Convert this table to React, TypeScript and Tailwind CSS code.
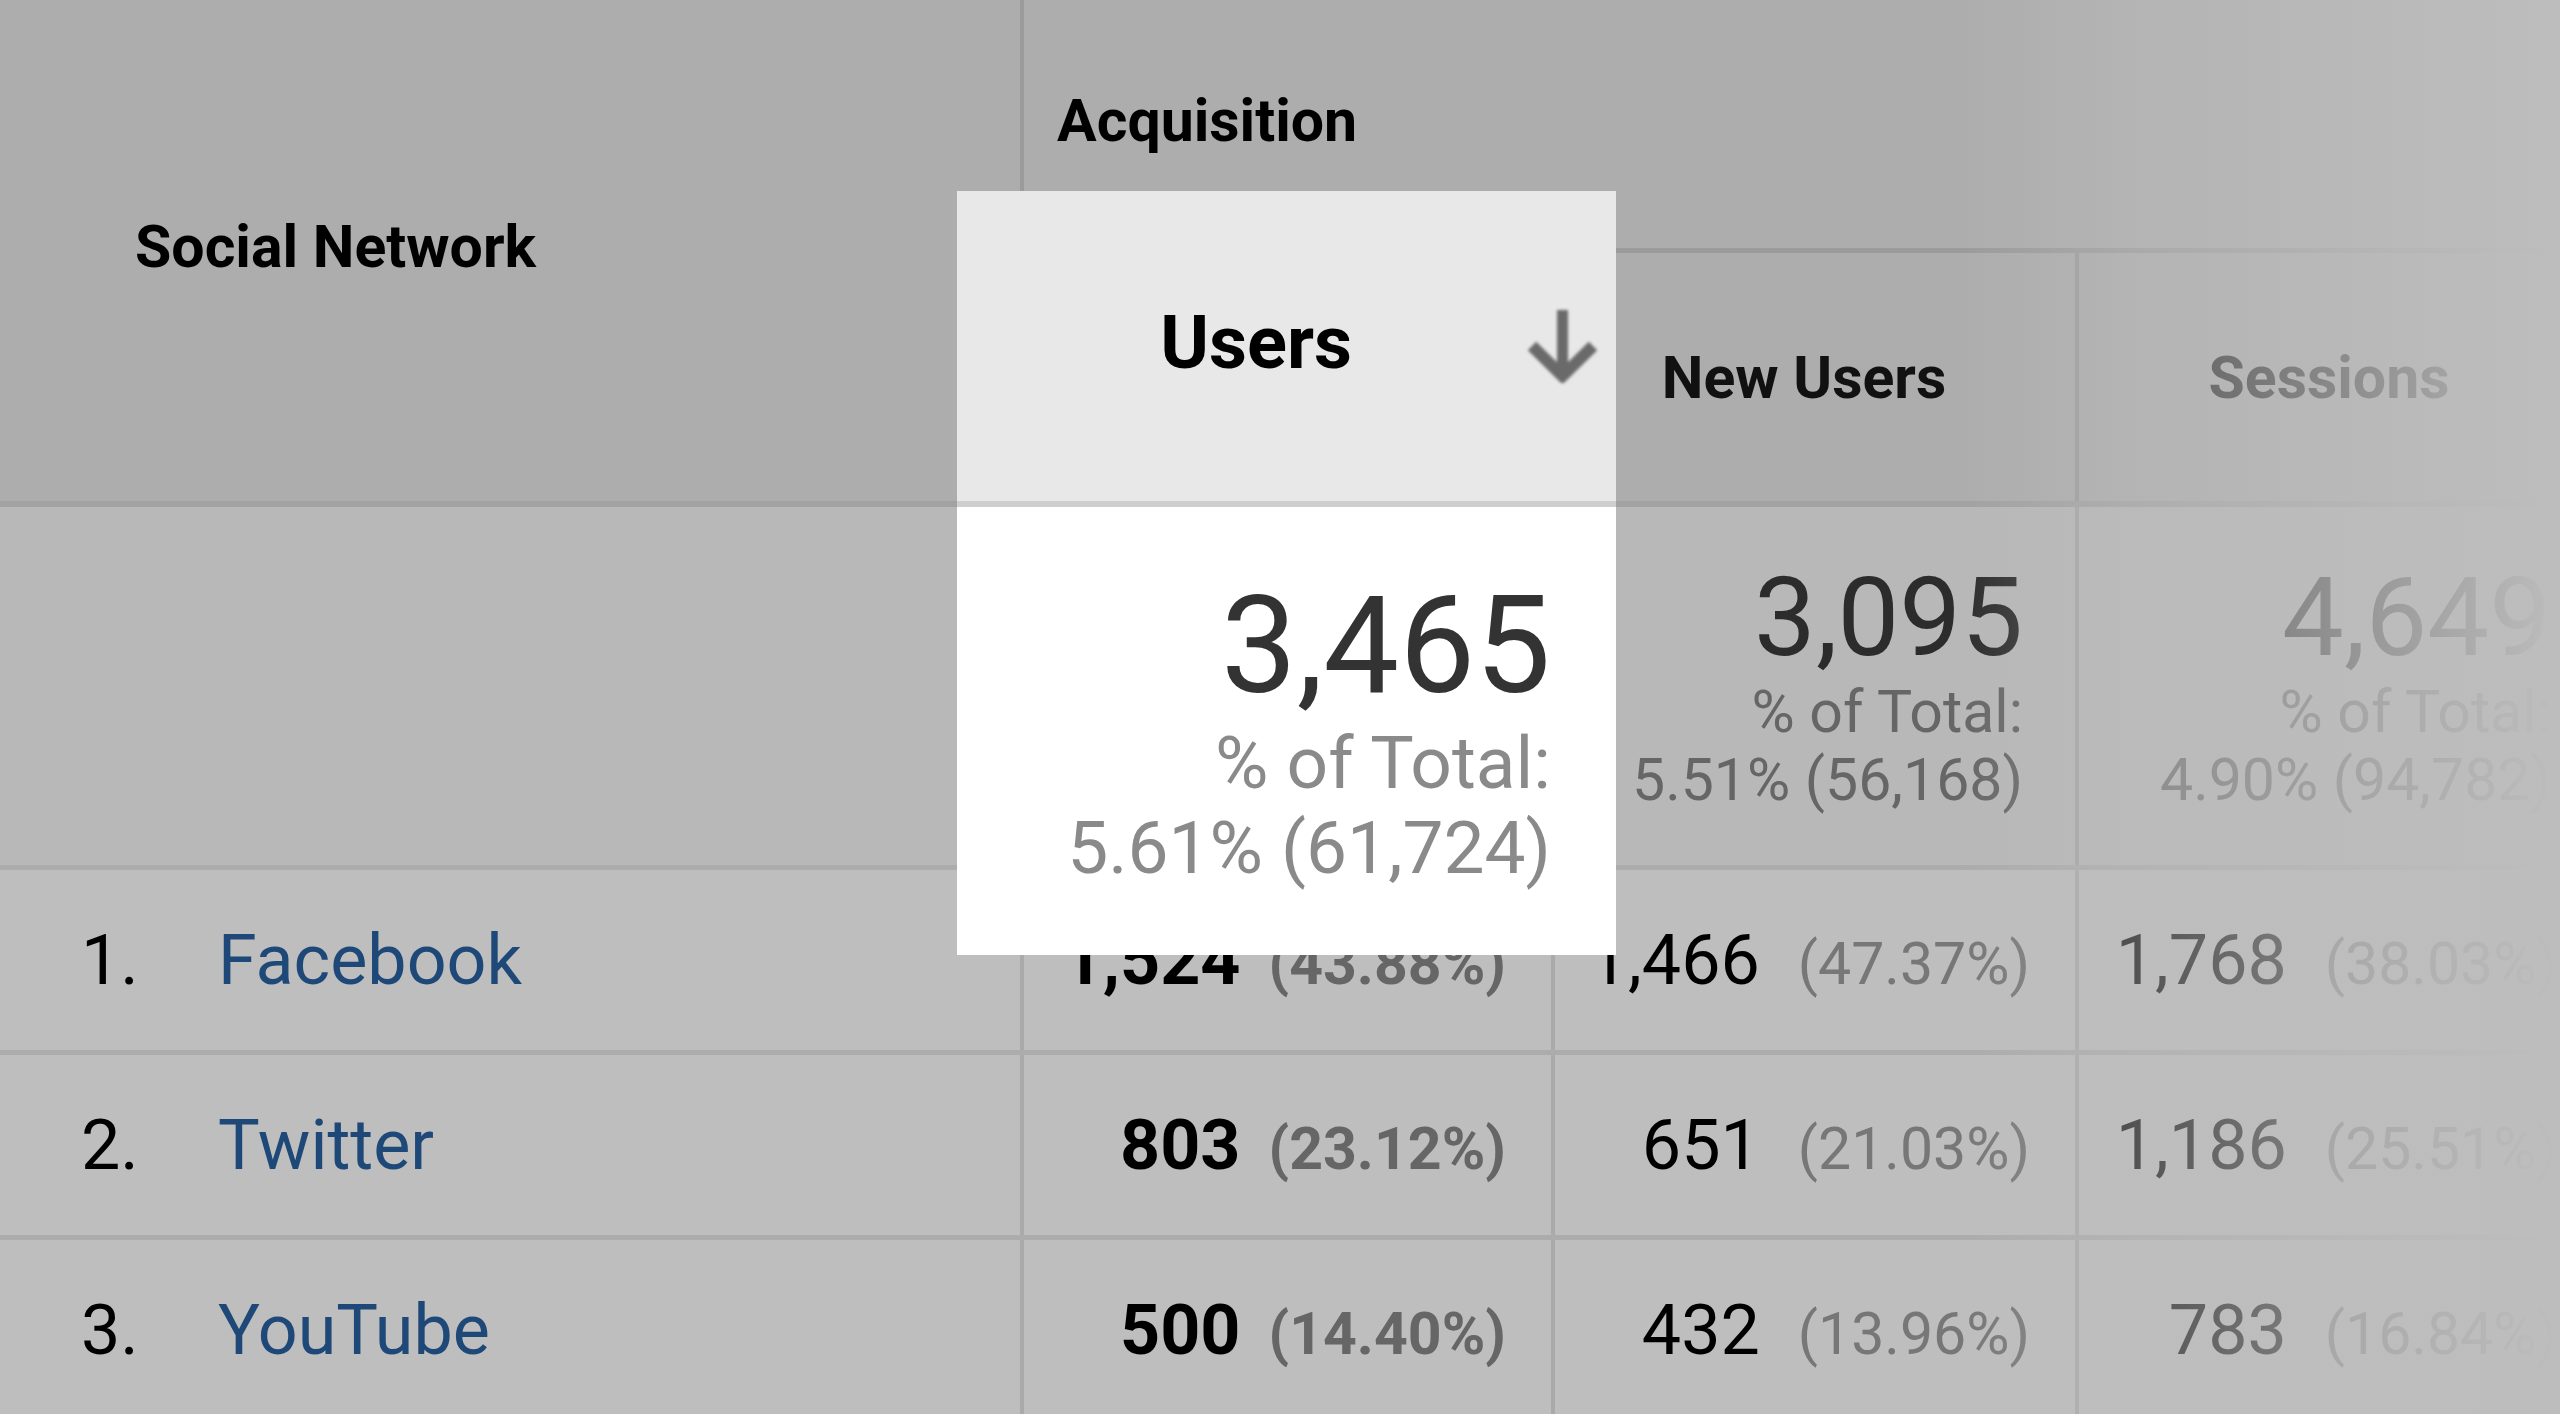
import React from "react";

type Row = {
  n: string;
  name: string;
  u: string;
  up: string;
  nu: string;
  nup: string;
  s: string;
  sp: string;
};

const rows: Row[] = [
  { n: "1.", name: "Facebook", u: "1,524", up: "(43.88%)", nu: "1,466", nup: "(47.37%)", s: "1,768", sp: "(38.03%)" },
  { n: "2.", name: "Twitter", u: "803", up: "(23.12%)", nu: "651", nup: "(21.03%)", s: "1,186", sp: "(25.51%)" },
  { n: "3.", name: "YouTube", u: "500", up: "(14.40%)", nu: "432", nup: "(13.96%)", s: "783", sp: "(16.84%)" },
];

function ArrowDown({ className }: { className?: string }) {
  return (
    <svg viewBox="0 0 71 74" className={className} fill="none" stroke="currentColor">
      <line x1="35.5" y1="1" x2="35.5" y2="66" strokeWidth="11" />
      <polyline points="5,37 35.5,67 66,37" strokeWidth="12" strokeLinejoin="miter" />
    </svg>
  );
}

function TotalCell({ w, pr, big, pct }: { w: string; pr: string; big: string; pct: string }) {
  return (
    <div className={`${w} ${pr} shrink-0 border-l-4 border-black/10 flex flex-col items-end pt-[50px]`}>
      <div className="text-[110px] leading-[121px] text-[#2c2c2c]">{big}</div>
      <div className="text-[59px] leading-[68px] text-[#666666]">% of Total:</div>
      <div className="text-[59px] leading-[68px] text-[#666666]">{pct}</div>
    </div>
  );
}

export default function App() {
  return (
    <div className="relative w-[2560px] h-[1414px] overflow-hidden bg-[#bebebe] font-['Roboto',sans-serif] text-black">
      {/* Header */}
      <div className="flex h-[507px] border-b-[6px] border-[#a2a2a2] bg-[#adadad]">
        <div className="w-[1020px] shrink-0 flex items-center pl-[135px] pb-[8px] text-[59px] font-bold leading-none">
          Social Network
        </div>
        <div className="w-[1589px] shrink-0 border-l-4 border-black/10 flex flex-col">
          <div className="h-[253px] border-b-[5px] border-black/10 flex items-center pl-[33px] pb-[8px] text-[59px] font-bold leading-none">
            Acquisition
          </div>
          <div className="flex flex-1">
            <div className="w-[527px] shrink-0 flex items-center justify-center text-[59px] font-bold leading-none">
              Users
            </div>
            <div className="w-[524px] shrink-0 border-l-4 border-black/10 flex items-center justify-center pr-[22px] text-[59px] font-bold leading-none text-[#111111]">
              New Users
            </div>
            <div className="w-[534px] shrink-0 border-l-4 border-black/10 flex items-center justify-center pr-[30px] text-[59px] font-bold leading-none text-[#111111]">
              Sessions
            </div>
          </div>
        </div>
      </div>

      {/* Totals row */}
      <div className="flex h-[363px] border-b-[5px] border-[#acacac] bg-[#b8b8b8]">
        <div className="w-[1020px] shrink-0" />
        <TotalCell w="w-[531px]" pr="pr-[52px]" big="3,465" pct="5.61% (61,724)" />
        <TotalCell w="w-[524px]" pr="pr-[52px]" big="3,095" pct="5.51% (56,168)" />
        <TotalCell w="w-[534px]" pr="pr-[58px]" big="4,649" pct="4.90% (94,782)" />
      </div>

      {/* Data rows */}
      {rows.map((r) => (
        <div key={r.n} className="flex h-[185px] border-b-[5px] border-[#acacac] bg-[#bebebe]">
          <div className="w-[1020px] shrink-0 flex items-center pl-[81px] text-[70px] leading-none">
            <span className="w-[137px] shrink-0 text-black">{r.n}</span>
            <span className="text-[#1e4878]">{r.name}</span>
          </div>
          <div className="w-[531px] shrink-0 border-l-4 border-black/10 flex items-center justify-end pr-[45px]">
            <div className="flex items-baseline leading-none">
              <span className="text-[70px] font-bold text-black">{r.u}</span>
              <span className="ml-[28px] text-[59px] font-bold text-[#666666]">{r.up}</span>
            </div>
          </div>
          <div className="w-[524px] shrink-0 border-l-4 border-black/10 flex items-center justify-end pr-[45px]">
            <div className="flex items-baseline leading-none">
              <span className="text-[70px] text-black">{r.nu}</span>
              <span className="ml-[38px] text-[59px] text-[#777777]">{r.nup}</span>
            </div>
          </div>
          <div className="w-[534px] shrink-0 border-l-4 border-black/10 flex items-center justify-end pr-[52px]">
            <div className="flex items-baseline leading-none">
              <span className="text-[70px] text-black">{r.s}</span>
              <span className="ml-[38px] text-[59px] text-[#777777]">{r.sp}</span>
            </div>
          </div>
        </div>
      ))}

      {/* Right fade overlay */}
      <div className="absolute left-[1960px] top-0 w-[600px] h-full bg-[linear-gradient(to_right,rgba(189,189,189,0)_0%,rgba(189,189,189,0.42)_27%,rgba(189,189,189,1)_100%)]" />

      {/* Magnified Users column */}
      <div className="absolute left-[957px] top-[191px] w-[659px] h-[764px] flex flex-col">
        <div className="h-[310px] shrink-0 bg-[#e8e8e8] flex items-center justify-end pr-[18px] pb-[7px]">
          <span className="text-[74px] font-bold leading-none text-black">Users</span>
          <ArrowDown className="ml-[175px] mt-[7px] w-[71px] h-[74px] text-[#6a6a6a] blur-[1.5px]" />
        </div>
        <div className="h-[6px] shrink-0 bg-[#cfcfcf]" />
        <div className="flex-1 bg-white flex flex-col items-end pt-[65px] pr-[65px]">
          <div className="text-[135px] leading-[149px] text-[#333333]">3,465</div>
          <div className="text-[73px] leading-[85px] text-[#8a8a8a]">% of Total:</div>
          <div className="text-[73px] leading-[85px] text-[#8a8a8a]">5.61% (61,724)</div>
        </div>
      </div>
    </div>
  );
}
